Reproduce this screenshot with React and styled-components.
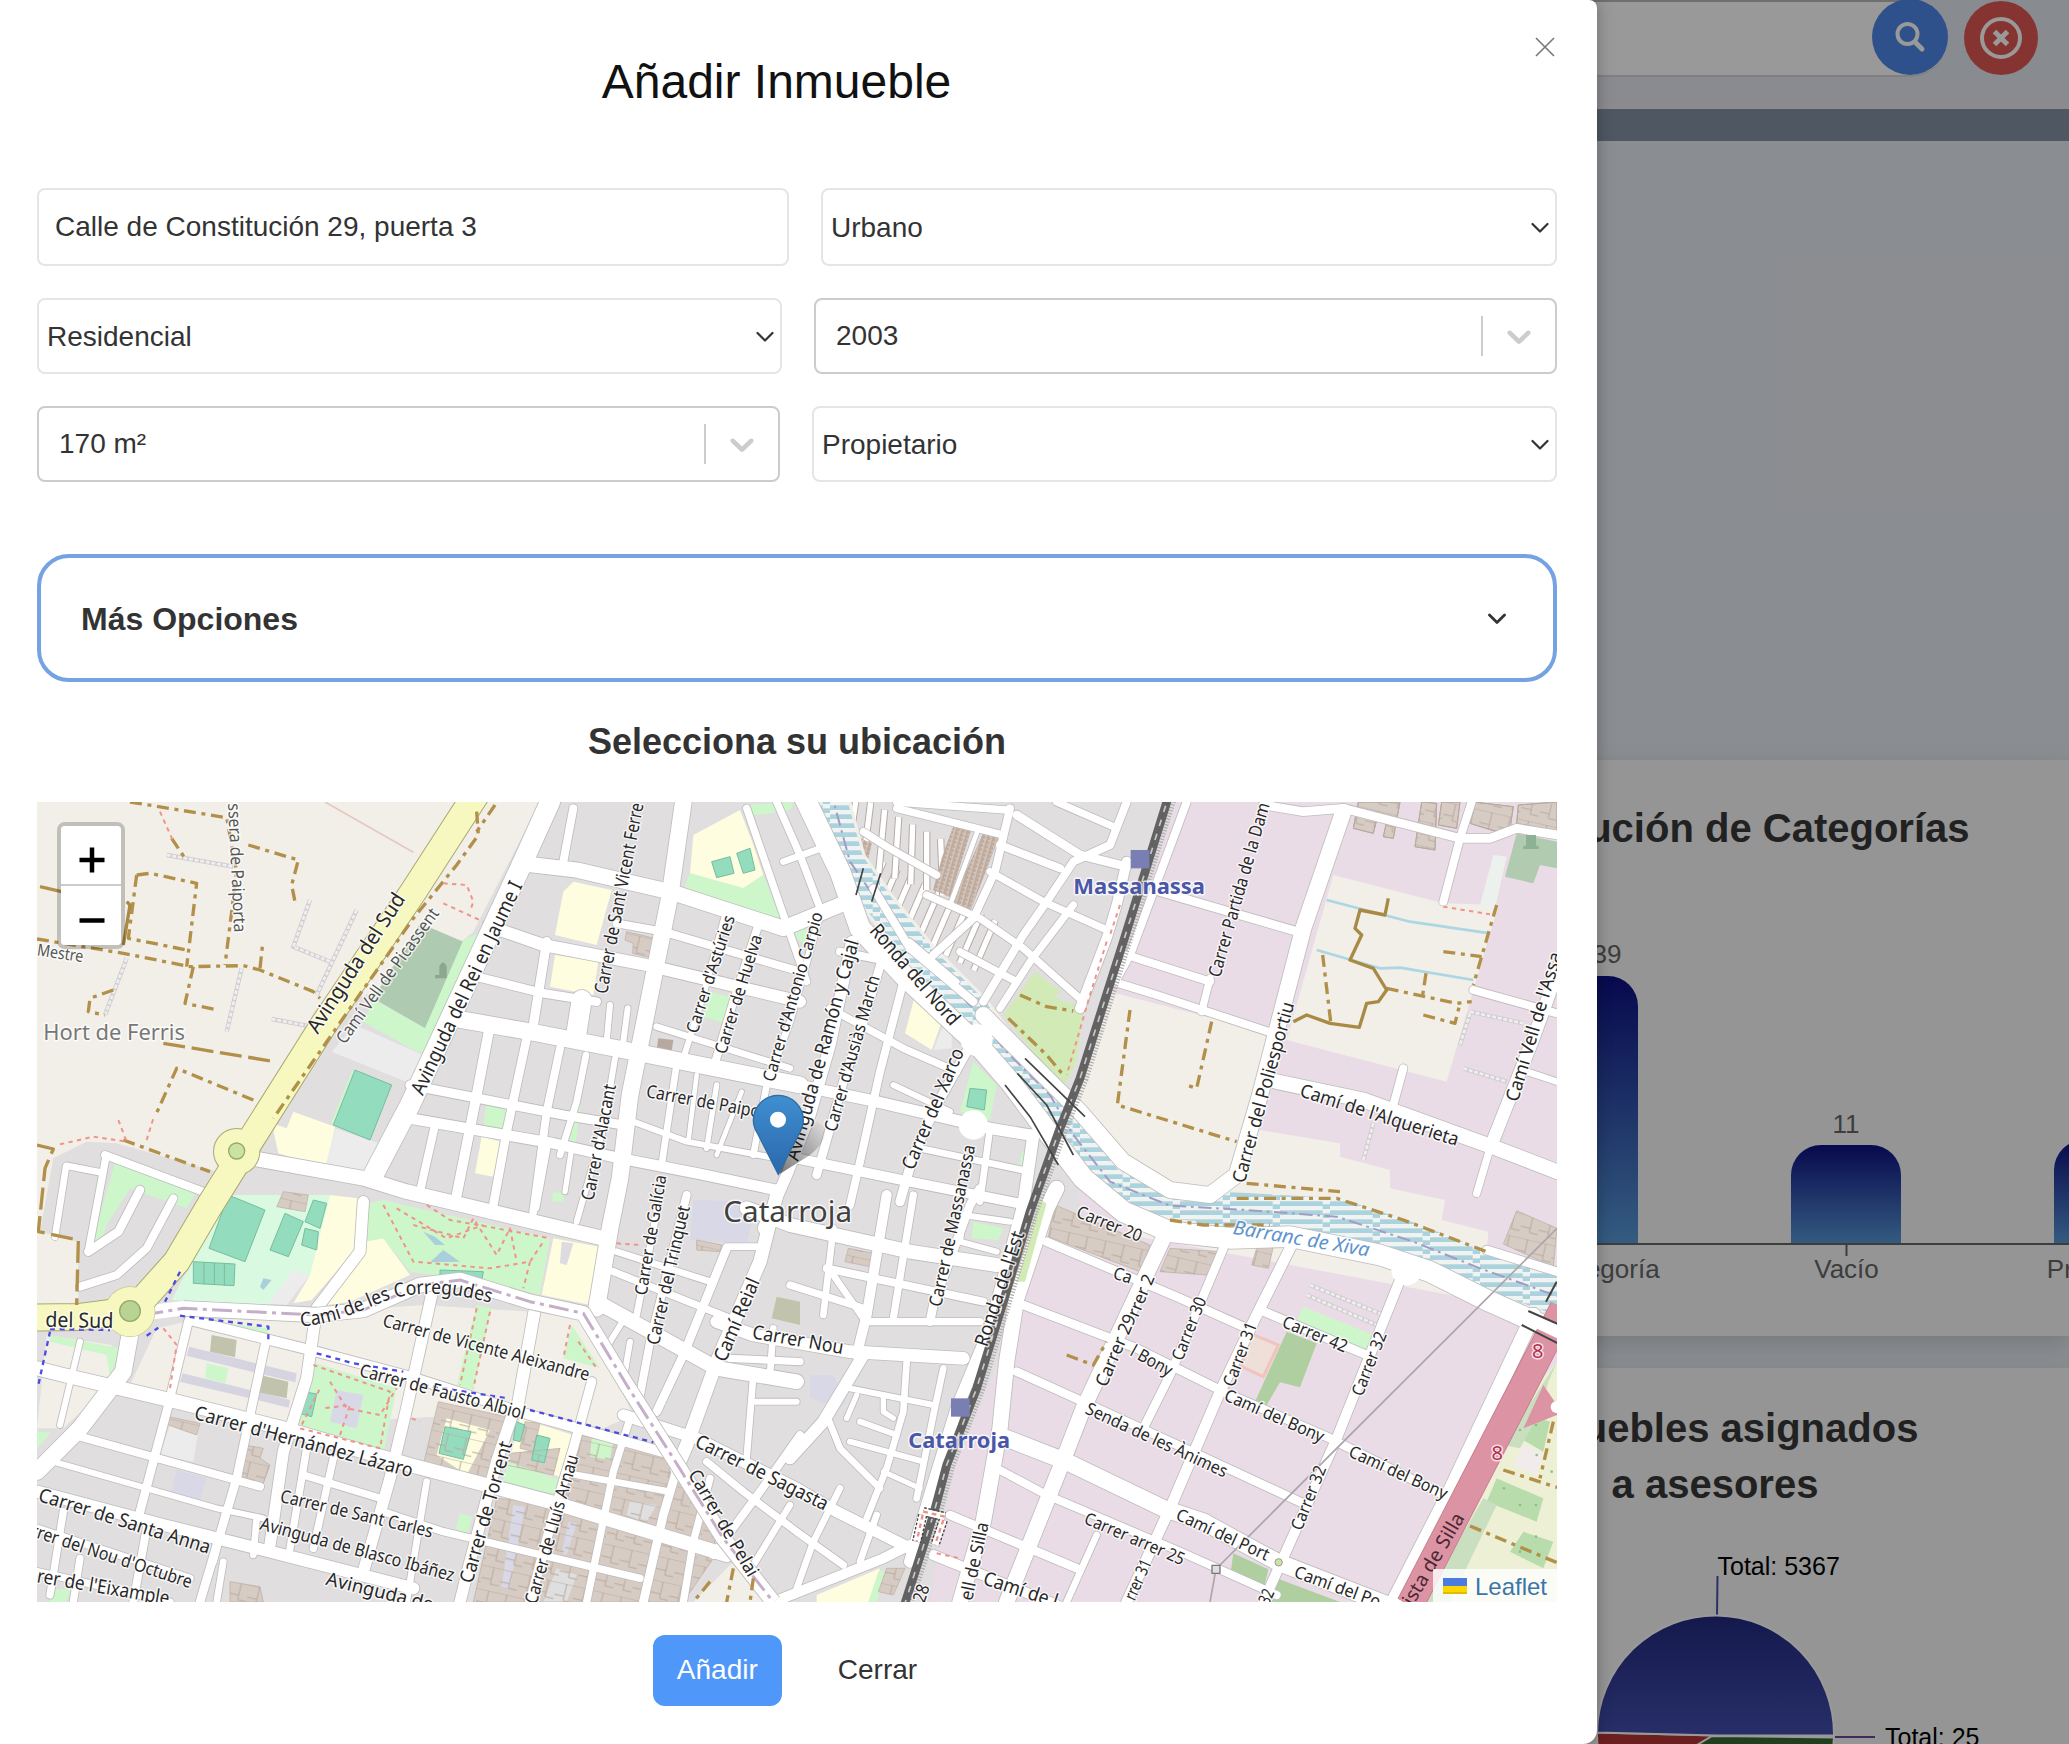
import React from "react";
import styled, { createGlobalStyle } from "styled-components";

const GlobalStyle = createGlobalStyle`
  * { box-sizing: border-box; }
  body { margin: 0; background: #e7ebf2; font-family: "Liberation Sans", Arial, sans-serif; color: #333; }
`;

/* ---------- dashboard behind the dialog ---------- */

const Page = styled.div`
  position: relative;
  width: 2069px;
  height: 1744px;
  overflow: hidden;
  background: #e7ebf2;
`;
const TopBar = styled.header`
  display: flex;
  justify-content: flex-end;
  align-items: flex-start;
  gap: 16px;
  height: 109px;
  padding-right: 31px;
  background: linear-gradient(#e3e8f0 70%, #e9e8ee);
`;
const SearchField = styled.div`
  display: flex;
  justify-content: flex-end;
  width: 900px;
  height: 77px;
  border: 2px solid #d5d5d8;
  border-top-color: #b9babd;
  border-right: 0;
  border-radius: 38px;
  background: #fff;
`;
const RoundButton = styled.div`
  display: flex;
  align-items: center;
  justify-content: center;
  width: ${(p) => p.$size}px;
  height: ${(p) => p.$size}px;
  margin-top: ${(p) => p.$top}px;
  border-radius: 50%;
  background: ${(p) => p.$color};
`;
const Band = styled.div`
  height: 32px;
  background: #8492a3;
`;
const Board = styled.main`
  display: flex;
  flex-direction: column;
  gap: 32px;
  margin-left: 1361px;
  padding-top: 619px;
`;
const Card = styled.section`
  flex: none;
  height: ${(p) => p.$height}px;
  padding-top: ${(p) => p.$pad}px;
  background: #f8f9fa;
  box-shadow: 0 8px 24px rgba(0, 0, 0, 0.14);
  text-align: center;
`;
const CardTitle = styled.h2`
  width: ${(p) => p.$width}px;
  margin: 0 auto;
  font-size: 40px;
  line-height: 56px;
  color: #383838;
`;
const Chart = styled.svg`
  display: block;
  margin-top: ${(p) => p.$gap}px;
  overflow: hidden;
`;
const Overlay = styled.div`
  position: absolute;
  inset: 0;
  background: rgba(0, 0, 0, 0.4);
`;

/* ---------- dialog ---------- */

const Dialog = styled.div`
  position: absolute;
  top: 0;
  left: 0;
  display: flex;
  flex-direction: column;
  width: 1597px;
  height: 1744px;
  padding: 0 40px 0 37px;
  border-radius: 0 8px 14px 0;
  background: #fff;
  box-shadow: 0 0 16px rgba(0, 0, 0, 0.28);
`;
const Header = styled.div`
  display: flex;
  justify-content: center;
  height: 188px;
  padding: 54px 41px 0 0;
`;
const Title = styled.h1`
  margin: 0;
  font-size: 48px;
  font-weight: 400;
  line-height: 56px;
  color: #111;
`;
const CloseButton = styled.div`
  position: absolute;
  top: 37px;
  right: 42px;
  line-height: 0;
`;
const Form = styled.div`
  display: flex;
  flex-direction: column;
  gap: 32px;
`;
const Row = styled.div`
  display: flex;
  justify-content: space-between;
  height: ${(p) => p.$height}px;
`;
const Field = styled.div`
  display: flex;
  align-items: center;
  width: ${(p) => p.$width}px;
  padding: ${(p) => p.$pad};
  border: 2px solid ${(p) => (p.$strong ? "#ccc" : "#e5e5e5")};
  border-radius: 8px;
  font-size: 28px;
  line-height: 34px;
`;
const FieldText = styled.span`
  flex: 1;
`;
const Separator = styled.span`
  width: 2px;
  height: 40px;
  margin-right: 16px;
  background: #ccc;
`;
const Accordion = styled.div`
  display: flex;
  align-items: center;
  justify-content: space-between;
  height: 128px;
  margin-top: 72px;
  padding: 1px 47px 0 40px;
  border: 4px solid #74a2e2;
  border-radius: 32px;
  font-size: 32px;
  line-height: 36px;
  font-weight: 700;
`;
const MapTitle = styled.h3`
  height: 120px;
  margin: 0;
  text-align: center;
  font-size: 36px;
  line-height: 120px;
`;
const MapFrame = styled.div`
  position: relative;
  width: 1520px;
  height: 800px;
  overflow: hidden;
`;
const ZoomControl = styled.div`
  position: absolute;
  top: 20px;
  left: 20px;
  border: 4px solid rgba(0, 0, 0, 0.2);
  border-radius: 8px;
  background-clip: padding-box;
  overflow: hidden;
`;
const ZoomButton = styled.div`
  display: flex;
  align-items: center;
  justify-content: center;
  width: 60px;
  height: ${(p) => (p.$divided ? 60 : 59)}px;
  padding: ${(p) => (p.$divided ? "9px 0 0 1px" : "0 0 0 1px")};
  border-bottom: ${(p) => (p.$divided ? "2px solid #ccc" : "0")};
  background: #fff;
`;
const Attribution = styled.div`
  position: absolute;
  right: 0;
  bottom: 0;
  display: flex;
  align-items: center;
  gap: 8px;
  height: 33px;
  padding: 1px 10px 0;
  background: rgba(255, 255, 255, 0.8);
  color: #3a76a8;
  font-size: 24px;
  line-height: 33px;
`;
const Actions = styled.div`
  display: flex;
  justify-content: center;
  gap: 32px;
  margin-top: 33px;
`;
const Button = styled.div`
  height: 71px;
  padding: 0 24px;
  border-radius: 12px;
  background: ${(p) => (p.$primary ? "#4f98fa" : "transparent")};
  color: ${(p) => (p.$primary ? "#fff" : "#333")};
  font-size: 28px;
  line-height: 70px;
`;

const Chevron = ({ w = 2.2 }) => (
  <svg width="18" height="12" viewBox="0 0 18 12" fill="none" stroke="#333" strokeWidth={w} strokeLinecap="round" strokeLinejoin="round">
    <path d="M1.5 2 L9 9.5 L16.5 2" />
  </svg>
);
const ThickChevron = () => (
  <svg width="40" height="40" viewBox="0 0 20 20" fill="#ccc">
    <path d="M4.516 7.548c0.436-0.446 1.043-0.481 1.576 0l3.908 3.747 3.908-3.747c0.533-0.481 1.141-0.446 1.574 0 0.436 0.445 0.408 1.197 0 1.615-0.406 0.418-4.695 4.502-4.695 4.502-0.217 0.223-0.502 0.335-0.787 0.335s-0.57-0.112-0.789-0.335c0 0-4.287-4.084-4.695-4.502s-0.436-1.17 0-1.615z" />
  </svg>
);
const SelectField = ({ width, children }) => (
  <Field $width={width} $pad="2px 6px 0 8px">
    <FieldText>{children}</FieldText>
    <Chevron />
  </Field>
);
const SearchSelect = ({ width, children }) => (
  <Field $width={width} $strong $pad="0 16px 0 20px">
    <FieldText>{children}</FieldText>
    <Separator />
    <ThickChevron />
  </Field>
);

/* ---------- map data: three units per pixel ---------- */

const C = {
  beige: "#f2efe9", pink: "#e9dce6", green: "#cdf7cb", pitch: "#94dcbe", school: "#fefde0",
  cemetery: "#aecab0", grass: "#d2ebb6", dark: "#afcfa1", brown: "#d7ccc4", lav: "#d8d8e6",
  light: "#ececec", olive: "#c2c3ac", complex: "#d9fae0", farm: "#eef0d6", dense: "#bfab9e",
};

const areas = [
  [C.beige, "21,21 1530,21 1330,410 1150,560 860,640 560,1130 260,1045 170,1040 70,1090 30,1310 145,1340 145,1530 21,1530"],
  [C.beige, "380,1600 470,1580 1180,1530 1660,1560 1810,1860 1720,1900 1500,1850 760,1890 430,1830 300,1770"],
  [C.beige, "50,1620 245,1650 250,1760 100,1900 21,1900"],
  [C.pink, "3440,21 4581,21 4581,2421 2700,2421 2740,2170 2780,2000 2890,1740 2980,1500 3040,1310 3150,1250 3130,900 3245,590"],
  [C.beige, "3240,590 3720,715 3610,1130 3500,1190 3300,1140 3130,930"],
  [C.beige, "3690,1005 3930,1045 3930,1085 4080,1125 4080,1180 4245,1215 4235,1275 4375,1310 4370,1375 4581,1450 4581,1560 3300,1320 3250,1180 3560,1190"],
  [C.beige, "3910,240 4240,325 4405,330 4250,860 3770,735"],
  [C.farm, "4581,1700 4450,1850 4150,2421 4581,2421"],
  [C.cemetery, "1030,610 1170,385 1300,440 1185,700"],
  [C.green, "1300,435 1345,415 1180,775 1140,760 1000,680 1030,612 1185,700"],
  [C.light, "975,690 1180,780 1140,865 905,770"],
  [C.light, "915,1000 1090,1060 1020,1120 970,1140 880,1110"],
  [C.green, "255,1105 500,1190 470,1240 300,1180 230,1290 205,1370 190,1330"],
  [C.green, "965,830 990,822 920,995 903,985"],
  [C.pitch, "975,825 1085,870 1020,1035 910,990"],
  [C.school, "790,950 915,995 885,1120 745,1075 725,985 770,1000"],
  [C.school, "1630,260 1745,285 1700,450 1575,420 1600,290"],
  [C.school, "1575,480 1705,500 1690,600 1560,575"],
  [C.school, "1355,1025 1415,1040 1390,1145 1335,1135"],
  [C.green, "1370,920 1437,928 1423,1010 1360,995"],
  [C.green, "1625,930 1652,930 1635,1058 1602,1050"],
  [C.green, "1570,1192 1605,1195 1598,1222 1565,1218"],
  [C.school, "1990,120 2130,45 2170,150 2200,240 2140,280 1980,235"],
  [C.green, "1980,235 2140,280 2200,240 2255,375 1960,285"],
  [C.pitch, "2045,200 2100,185 2112,235 2060,248"],
  [C.pitch, "2120,175 2160,160 2175,225 2140,235"],
  [C.green, "2150,30 2290,21 2280,45 2165,62"],
  [C.green, "2040,590 2100,605 2085,685 2020,665"],
  [C.green, "2290,385 2335,375 2325,450 2300,430"],
  [C.brown, "1790,410 1875,430 1860,487 1808,475 1810,445 1785,435"],
  ["#b8a99e", "1885,730 1930,735 1925,768 1880,762"],
  [C.dense, "2770,95 2825,100 2760,305 2710,285 2735,190"],
  [C.dense, "2860,115 2905,130 2820,350 2765,325"],
  [C.dense, "2490,130 2525,145 2510,210 2480,190"],
  [C.grass, "3015,530 3160,640 3140,800 3100,880 2920,660"],
  ["#e0dfdf", "3070,600 3100,590 3150,630 3100,620"],
  [C.school, "2655,600 2735,680 2705,765 2625,715"],
  [C.light, "2740,690 2765,710 2765,760 2710,765"],
  [C.green, "2830,800 2900,870 2880,975 2790,950"],
  [C.pitch, "2820,880 2870,885 2863,945 2810,935"],
  [C.green, "2975,1070 3000,1075 2995,1115 2968,1110"],
  [C.green, "2830,1280 2920,1300 2905,1335 2825,1330"],
  ["#b0cbb0", "4460,115 4581,140 4581,220 4530,210 4510,265 4425,245"],
  ["#edf1ee", "4390,180 4430,185 4395,340 4350,330"],
  [C.complex, "590,1200 900,1200 870,1400 840,1440 720,1530 425,1515"],
  [C.pitch, "595,1200 705,1245 645,1400 537,1360"],
  [C.pitch, "765,1255 820,1280 775,1385 720,1365"],
  [C.pitch, "850,1215 890,1225 870,1300 825,1280"],
  [C.pitch, "825,1300 865,1310 860,1365 815,1350"],
  [C.pitch, "490,1400 615,1407 612,1472 490,1465"],
  [C.light, "790,1425 840,1440 770,1530 715,1525"],
  [C.brown, "760,1190 835,1200 825,1250 740,1235"],
  [C.school, "900,1200 985,1210 975,1365 845,1515 790,1525 840,1440"],
  [C.school, "1000,1340 1060,1330 1140,1440 960,1520 890,1530"],
  [C.green, "1000,1230 1060,1215 1560,1330 1530,1500 1340,1455 1140,1430 1060,1330 1000,1340"],
  [C.pitch, "1230,1425 1360,1430 1355,1458 1230,1445"],
  ["#a9d0da", "1180,1310 1215,1325 1245,1350 1215,1350"],
  ["#a9d0da", "1240,1365 1290,1400 1200,1402"],
  ["#a9d0da", "700,1450 725,1455 700,1485 690,1475"],
  [C.school, "1570,1330 1708,1355 1683,1530 1535,1500"],
  ["#dddbe0", "1595,1340 1630,1345 1610,1410 1590,1405"],
  [C.green, "845,1700 1100,1780 1060,1975 795,1905"],
  [C.lav, "920,1785 1000,1800 980,1900 900,1880"],
  [C.pitch, "820,1790 860,1797 845,1865 808,1855"],
  ["#d6d4e0", "478,1655 800,1735 796,1762 470,1682"],
  ["#d6d4e0", "458,1735 780,1815 776,1838 450,1760"],
  [C.olive, "545,1620 620,1635 615,1687 540,1670"],
  [C.olive, "690,1740 775,1760 770,1810 683,1792"],
  [C.green, "530,1705 595,1720 587,1765 525,1750"],
  [C.light, "420,1890 510,1880 490,2000 390,1980"],
  [C.brown, "415,1865 510,1885 500,1920 415,1890"],
  [C.brown, "645,1950 700,1960 690,1990 720,2010 700,2065 610,2040"],
  [C.lav, "440,2025 530,2050 510,2115 425,2095"],
  [C.green, "60,1620 270,1660 240,1750 230,1680 60,1640"],
  [C.green, "21,1910 65,1910 21,1960"],
  [C.green, "485,1575 715,1600 712,1635 500,1590"],
  [C.green, "1340,1530 1385,1540 1330,1785 1280,1770"],
  [C.green, "1625,1590 1710,1720 1600,1690"],
  [C.brown, "1225,1820 1430,1865 1370,2055 1180,2010"],
  [C.school, "1250,1870 1380,1905 1310,2040 1220,1980"],
  [C.pitch, "1245,1895 1323,1910 1300,1993 1227,1975"],
  [C.school, "1470,1870 1630,1920 1600,2050 1440,1990"],
  [C.brown, "1485,1880 1530,1885 1510,1970 1470,1960"],
  [C.brown, "1440,1975 1590,1960 1570,2040 1430,2010"],
  [C.pitch, "1458,1880 1485,1890 1470,1940 1450,1935"],
  [C.pitch, "1520,1920 1560,1930 1543,2003 1505,1995"],
  [C.green, "1435,2000 1575,2050 1640,2060 1575,2115 1415,2070"],
  [C.brown, "1650,1920 1940,1990 2060,2160 2050,2290 1960,2421 1330,2421 1400,2110 1600,2130"],
  [C.green, "1685,1930 1750,1940 1740,1995 1680,1985"],
  ["#e0dfdf", "1800,2120 1880,2130 1850,2180 1790,2160"],
  ["#e0dfdf", "1580,2320 1640,2340 1610,2421 1540,2421"],
  [C.lav, "1450,2130 1485,2135 1440,2380 1415,2375"],
  [C.lav, "1615,2180 1640,2185 1610,2280 1595,2275"],
  [C.green, "1290,2155 1325,2165 1315,2215 1275,2210"],
  [C.beige, "2110,2300 2200,2360 2260,2421 1990,2421"],
  [C.brown, "600,2360 690,2375 700,2421 600,2421"],
  [C.green, "60,2380 120,2385 110,2421 60,2421"],
  [C.olive, "2240,1505 2310,1520 2310,1590 2225,1570"],
  [C.lav, "1990,1215 2180,1220 2150,1345 1980,1335"],
  [C.brown, "2000,1335 2075,1350 2070,1370 2000,1365"],
  [C.brown, "2455,1360 2530,1375 2520,1415 2445,1400"],
  [C.lav, "2340,1740 2410,1740 2450,1820 2430,1840 2340,1810"],
  [C.brown, "3075,1230 3360,1350 3330,1430 3055,1325"],
  [C.brown, "3420,1360 3570,1370 3530,1440 3390,1430"],
  [C.brown, "3680,1360 3730,1355 3715,1420 3665,1410"],
  [C.school, "2360,2400 2550,2320 2520,2421 2360,2421"],
  [C.green, "2545,2330 2570,2325 2540,2421 2515,2421"],
  [C.brown, "2570,2320 2625,2320 2590,2400 2545,2390"],
  [C.green, "3820,1535 4030,1620 4020,1672 3800,1575"],
  [C.dark, "3770,1610 3860,1645 3810,1777 3750,1762 3710,1830 3675,1820"],
  ["#efdfd9", "3660,1615 3745,1650 3700,1745 3635,1715"],
  [C.dark, "3610,2275 3715,2323 3700,2387 3600,2345"],
  [C.dark, "3740,2350 3930,2421 3720,2421"],
  [C.brown, "4460,1247 4581,1300 4570,1415 4420,1347"],
  ["#b9dcac", "4500,1860 4560,1880 4540,1970 4470,1930"],
  ["#b9dcac", "4400,2050 4540,2110 4520,2180 4370,2120"],
  ["#b9dcac", "4480,2210 4570,2240 4540,2320 4440,2270"],
  ["#c9dfc0", "4360,2110 4400,2130 4260,2421 4180,2421"],
  ["#f1eceb", "4480,1950 4540,1975 4520,2040 4450,2010"],
  ["#c9dfc0", "4581,1700 4555,1760 4530,1850 4470,1960 4420,1950"],
];

const houses = [
  "3985,21 4110,21 4090,130 4060,125 4070,80 4040,75 4030,115 3970,100",
  "4175,21 4220,25 4215,165 4155,155", "4235,21 4290,21 4280,100 4225,90",
  "4330,21 4450,35 4440,100 4400,110 4320,85", "4465,30 4581,21 4581,110 4460,85",
];

const roads = [
  [60, "1560,21 1470,220 1140,930 1030,1140"],
  [44, "640,1085 1000,1150 1130,1190 1720,1330"],
  [46, "1470,205 1640,225 1920,290 2260,400 2430,330"],
  [36, "1410,405 1540,450 1850,510 2310,620"],
  [24, "1760,385 1900,410 2310,530"],
  [26, "1320,540 1540,595 1700,620"],
  [50, "1270,670 1500,710 1860,780 2310,870"],
  [34, "2280,865 2540,920 2880,1000 3000,1020"],
  [20, "1880,695 2280,820"],
  [28, "1140,870 1600,960 1780,990"],
  [32, "1110,965 1570,1045 1770,1090 2000,1135 2240,1185"],
  [30, "2250,1080 2640,1160 2990,1230"],
  [42, "2150,1240 2280,1290 2640,1370 2900,1410"],
  [18, "1810,980 1970,1040 2240,1090"],
  [24, "1630,40 1600,200"],
  [50, "1960,21 1920,300 1840,700 1800,900 1770,1150 1740,1300 1700,1540"],
  [28, "1550,440 1510,690"],
  [30, "1380,690 1340,900 1280,1200"],
  [26, "1490,730 1430,1010 1390,1230"],
  [24, "1590,760 1550,950 1510,1250"],
  [20, "1668,780 1640,920 1590,1080"], [18, "1755,790 1720,1000 1640,1280"],
  [24, "1215,990 1170,1190"],
  [60, "1655,615 1640,710"], [18, "1740,630 1730,740"], [18, "1793,640 1780,740"], [16, "1555,1050 1520,1240"], [16, "1625,1060 1605,1190"],
  [20, "1938,820 1895,1110"], [14, "2000,840 1975,1040"], [16, "2060,870 2030,1060"], [14, "2135,890 2060,1080"],
  [18, "2085,360 2020,600 1960,790"], [24, "2185,390 2110,620 2050,820"], [20, "2370,360 2280,680 2210,870 2170,1080"],
  [34, "2465,440 2400,750 2340,960 2270,1140 2200,1300"], [26, "2560,480 2500,680 2440,860 2400,1000 2360,1140"],
  [24, "2620,560 2550,830 2490,1100 2460,1230"], [28, "2810,770 2720,930 2650,1080 2610,1220"],
  [22, "2150,40 2250,330 2330,560"], [20, "2260,200 2400,150"], [22, "2240,21 2310,180 2370,340"],
  [24, "2430,470 2580,500"], [22, "2400,640 2620,760 2780,830"], [18, "2590,870 2760,950"],
  [20, "2670,1060 3000,1130"], [20, "2880,1000 2850,1220"], [22, "2600,40 2920,120"],
  [22, "2500,110 2570,155 2720,240"], [22, "2690,300 2850,370 2980,460 3160,620"],
  [24, "2910,150 3090,220"], [22, "2880,230 3040,320 3220,400"], [26, "2960,60 3150,180 3290,215"],
  [22, "2600,21 2930,45"], [22, "3080,21 3250,95"], [24, "2940,40 2895,230 2830,370 2710,480"],
  [24, "3290,21 3240,150 3130,200 3050,320 2980,420 2860,620"], [30, "3290,200 3260,330 3230,430 3150,640"],
  [22, "3130,330 3000,500 2910,640"], [22, "2790,470 2960,560"], [18, "2640,440 2780,560"],
  [14, "2842,110 2762,325"],
  [26, "3390,290 3820,415"], [24, "3290,480 3540,560"], [22, "3540,550 3515,650"], [24, "3250,560 3380,600 3730,715"],
  [24, "3470,21 3300,480 3255,560"], [26, "3700,30 3820,50 3940,40 4290,130 4380,130 4460,100 4581,120"],
  [24, "4325,21 4290,130 4240,320"], [44, "3740,860 4000,915 4400,1060 4581,1130"], [24, "4120,820 4090,930"],
  [38, "4600,480 4510,730 4380,1060"], [22, "4380,1060 4340,1195"], [24, "4330,585 4581,655"], [20, "4490,830 4581,860"],
  [36, "3010,1020 2980,1230 2880,1600 2780,1840 2700,2100 2640,2300"],
  [46, "3080,1180 3050,1240 2960,1510 2930,1700 2910,1900 2860,2180 2790,2421"],
  [26, "3050,1340 3450,1510 3650,1600"], [26, "3690,1545 4010,1680"],
  [26, "2980,1530 3320,1660 3580,1790 3900,1930 4260,2110"],
  [26, "2960,1730 3170,1825 3420,1940 3830,2130"],
  [50, "2930,1930 3110,2000 3400,2140 3520,2180 3740,2300 4100,2440"],
  [24, "2900,2020 3050,2100 3450,2270 3740,2400"], [26, "2760,2160 3140,2320"], [30, "2710,2280 3080,2430"],
  [46, "3400,1330 3160,1840 3090,2020 2930,2421"], [26, "3580,1360 3420,1740 3340,1900"],
  [32, "3790,1340 3680,1560 3570,1790 3420,2140 3290,2421"], [30, "4120,1430 3920,1930 3750,2310 3700,2421"],
  [20, "3200,2220 3110,2421"], [44, "4510,1560 4260,2090 4090,2421"], [26, "4370,1365 4581,1430"],
  [24, "225,1080 520,1190"], [20, "110,1112 210,1132"], [22, "228,1085 175,1370"], [20, "108,1115 75,1325"],
  [24, "150,1475 260,1440 350,1360 430,1210"], [26, "175,1370 265,1310 330,1185"],
  [34, "1000,1220 990,1370 860,1540 830,1750 760,1970 720,2250"],
  [26, "475,1580 410,1850 330,2150"], [26, "705,1650 620,2050 510,2421"],
  [30, "480,1575 840,1665 1140,1745 1500,1860 1930,1980"],
  [42, "21,1720 100,1740 440,1820 760,1900 1140,2010 1560,2120 2090,2280"],
  [50, "310,1560 280,1730 150,1900 21,2030"], [18, "40,1735 210,1770"], [18, "150,1640 90,1890"],
  [24, "150,1925 690,2075"], [18, "70,2000 560,2140 700,2170"],
  [36, "21,2090 400,2190 800,2290 1150,2380"], [22, "21,2200 480,2350"], [22, "21,2330 420,2421"],
  [22, "100,2150 60,2400"], [24, "350,2200 310,2421"], [22, "590,2140 550,2300"], [20, "680,2170 670,2280"],
  [22, "910,1990 850,2260"], [22, "830,1960 780,2260"], [22, "150,2290 130,2421"], [20, "580,2300 560,2421"],
  [22, "820,2040 1050,2110"], [34, "1450,1850 1400,2000 1320,2300 1290,2421"], [36, "1515,1540 1460,1850"],
  [34, "1205,1500 1130,1840 1080,2050 1000,2330"], [28, "1685,1760 1630,1960 1570,2160 1500,2421"],
  [22, "1800,1870 1750,2030 1670,2421"], [26, "1950,1990 1900,2160 1840,2421"], [22, "2040,2050 1990,2240 1960,2421"],
  [20, "1640,2040 1920,2090"], [22, "1060,2150 1240,2210 1830,2350"], [20, "1190,2060 1130,2421"],
  [44, "1700,1520 2060,1720 2300,1760"], [38, "2060,1580 2170,1620 2460,1670 2800,1690"],
  [20, "1760,1370 2040,1460"], [22, "1750,1430 2100,1570"], [24, "1970,1200 1860,1640 1830,1800"],
  [20, "1890,1200 1820,1560"], [40, "2240,1200 2190,1400 2060,1700 1970,1950 1940,2020"],
  [26, "2090,1360 1960,1680 1880,1850"], [20, "2090,1355 2180,1355"], [22, "2100,1690 2310,1700"],
  [34, "1780,1860 2000,1930 2300,2080 2420,2150 2640,2260"], [24, "2310,1920 2190,2090 2050,2280"],
  [22, "2030,2000 2140,2090 2300,2210 2440,2310"], [20, "2280,2130 2170,2310"], [36, "2500,1680 2380,1880 2280,1990"],
  [20, "2170,1740 2150,1990"], [20, "2230,1600 2220,1740"], [18, "2170,1820 2300,1820"], [18, "1790,1560 1740,1640"], [18, "1800,1640 1780,1760"],
  [20, "2390,1860 2430,1960 2550,2080"], [20, "2630,1700 2620,1850 2570,2020 2510,2170"],
  [20, "2740,1720 2710,1860 2660,2110"], [18, "2460,1780 2710,1830"], [18, "2460,1940 2680,2000"],
  [16, "2480,1800 2450,1870"], [16, "2560,1800 2560,1850 2590,1870"], [16, "2560,2030 2670,2080"], [18, "2490,1880 2600,1920"],
  [30, "2230,2421 2560,2290 2640,2250"], [20, "2430,2080 2350,2240 2300,2380"], [20, "2540,2160 2490,2300"],
  [30, "2570,1200 2540,1380 2510,1560 2480,1680"], [22, "2650,1200 2590,1570"],
  [26, "2850,1180 2820,1230 2710,1530 2700,1580"], [22, "2520,1580 2850,1580"], [24, "2390,1420 2860,1520"],
  [20, "2410,1300 2380,1560"], [20, "2410,1440 2500,1570"], [22, "2280,1470 2500,1540"],
  [18, "2800,1260 2790,1340 2900,1370"], [18, "2800,1260 2940,1280"],
  [24, "2530,280 2640,460 2830,620"],
  [48, "2860,660 2990,790 3150,950 3280,1100 3420,1185 3540,1200 3620,1140 3690,900 3820,400 3940,50"],
  [62, "2310,-20 2430,230 2490,400 2620,540 2790,700 2840,745 2940,860 3060,1020 3160,1150 3280,1250 3420,1310 3600,1330 3780,1325 4050,1380 4200,1430 4380,1520 4581,1610"],
];

const tracks = [
  "300,21 590,68 620,230 585,510", "655,150 805,195 785,270 795,320", "425,130 465,190",
  "320,240 360,235 500,265 470,515", "320,240 295,430 470,465", "21,432 280,475 480,515 640,512 690,525 850,590 870,610",
  "690,520 697,455", "490,515 465,625 565,645", "250,585 180,610 175,650 225,660", "670,915 440,820 375,965",
  "280,1035 540,1130", "1395,30 1340,110", "1340,50 1345,120 1280,210 1150,370 960,640 730,970",
  "2935,670 3050,780 3100,840", "2970,600 3050,635 3130,648", "3300,645 3262,930 3620,1040", "3545,680 3500,880 3470,870",
  "4070,580 4280,625 4325,620", "4400,330 4330,570", "4240,470 4355,485", "3878,480 3902,680", "4180,660 4275,685 4290,625",
  "4188,535 4178,600", "3650,1165 3930,1190", "3620,1210 3920,1210 4120,1275 4370,1370", "3420,1275 3520,1290 3720,1290",
  "4420,2025 4581,2077", "4320,2193 4581,2303", "4570,1880 4530,2050", "3110,1680 3190,1710 3230,1640",
  "2110,2320 2090,2421", "2040,2360 1990,2421", "2170,2350 2160,2421",
];
const longTracks = ["400,745 735,800", "30,275 95,290", "21,1050 70,1062 45,1120 25,1310 145,1335 140,1530"];
const solidTracks = [
  "4075,310 4065,360 3990,345 3975,400 3995,420 3960,495 4030,520 4070,585 4045,620 4010,625 3988,697 3900,685 3830,660 3790,680",
  "290,320 300,330 280,450",
];
const footways = [
  "390,50 430,140", "90,1048 190,1025 290,1040 265,975", "350,1035 370,970", "1240,265 1310,270 1330,320 1320,350", "1240,325 1360,380",
  "400,1600 440,1650 420,1780", "1190,1230 1260,1275 1400,1300 1560,1330", "1060,1230 1150,1400 1380,1420 1500,1400 1540,1340",
  "1150,1290 1300,1330 1330,1270 1400,1380 1440,1300 1460,1400", "1500,1400 1480,1480", "1100,1240 1250,1330 1360,1290",
  "850,1710 1080,1790 1050,1960 810,1900 870,1780", "900,1760 950,1840 1050,1860 1100,1780", "930,1920 960,1830 880,1840",
  "1340,1540 1290,1770", "1380,1550 1330,1780", "1620,1590 1600,1690", "1645,1640 1700,1720", "3230,440 3180,600 3110,840",
  "4240,335 4380,358", "1760,1345 1830,1350", "3270,330 3240,420", "2720,2275 2790,2290", "1145,1870 1170,1880",
];
const cycleways = ["450,1430 405,1520", "450,1562 715,1595 715,1635", "60,1610 25,1770", "60,1602 240,1605", "350,1622 385,1598", "860,1675 970,1705 1120,1730", "1500,1845 1870,1942", "1180,1770 1430,1810"];
const serviceRoads = [
  "410,180 610,215", "840,315 790,455 900,500", "980,345 860,600", "290,490 225,660", "635,520 590,710", "725,672 830,692",
  "4320,655 4290,750", "4320,650 4480,685", "4300,820 4430,860", "4030,985 4000,1095", "3840,1470 4060,1560", "3830,1500 4040,1590",
];

const RAIL = "3420,-10 3280,440 3150,850 3090,1000 3000,1250 2920,1520 2840,1780 2750,2010 2710,2160 2620,2440";
const RIVER = "2400,-20 2460,200 2550,330 2680,490 2830,640 2920,760 3060,900 3130,1020 3240,1160 3420,1232 3650,1245 3920,1265 4150,1340 4350,1420 4600,1510";
const YELLOW = "1350,-20 1150,290 880,690 640,1070 540,1230 440,1400 310,1545 150,1566 10,1568";

/* text, x1, y1, x2, y2 (centre line of the label), size */
const labels = [
  ["ssera de Paiporta", 612, 25, 630, 412, 48, "#555"],
  ["Mestre", 22, 464, 160, 485, 46, "#555"],
  ["Avinguda del Sud", 845, 708, 1110, 300, 58],
  ["Camí Vell de Picassent", 930, 740, 1215, 345, 48, "#555"],
  ["Avinguda del Rei en Jaume I", 1160, 895, 1460, 262, 56],
  ["Carrer de Sant Vicent Ferre", 1712, 595, 1822, 24, 52],
  ["Carrer d'Astúries", 1985, 712, 2098, 362, 48],
  ["Carrer de Huelva", 2070, 775, 2180, 420, 48],
  ["Carrer d'Antonio Carpio", 2215, 858, 2362, 352, 48],
  ["Carrer de Paipo", 1850, 888, 2190, 950, 50],
  ["Carrer d'Alacant", 1672, 1215, 1740, 868, 50],
  ["Avinguda de Ramón y Cajal", 2285, 1095, 2468, 435, 54],
  ["Carrer d'Ausiàs March", 2400, 1008, 2532, 542, 50],
  ["Ronda del Nord", 2532, 395, 2778, 682, 56],
  ["Carrer del Xarco", 2632, 1120, 2785, 762, 54],
  ["Carrer Partida de la Dam", 3552, 545, 3702, 24, 50],
  ["Carrer del Poliesportiu", 3625, 1162, 3775, 622, 52],
  ["Camí de l'Alquerieta", 3812, 885, 4285, 1035, 52],
  ["Camí Vell de l'Assa", 4445, 918, 4578, 472, 52],
  ["del Sud", 46, 1574, 250, 1578, 58],
  ["Carrer de Vicente Aleixandre", 1060, 1575, 1678, 1740, 50],
  ["Carrer de Fausto Albiol", 990, 1725, 1485, 1856, 50],
  ["Carrer d'Hernández Lázaro", 495, 1852, 1148, 2028, 54],
  ["Carrer de Sant Carles", 752, 2102, 1208, 2210, 50],
  ["Avinguda de Blasco Ibáñez", 692, 2185, 1272, 2342, 50],
  ["Avinguda de", 890, 2350, 1210, 2430, 52],
  ["Carrer de Santa Anna", 28, 2098, 540, 2258, 54],
  ["rrer del Nou d'Octubre", 5, 2205, 485, 2362, 50],
  ["rer de l'Eixample", 22, 2342, 418, 2410, 54],
  ["Carrer de Torrent", 1308, 2362, 1428, 1940, 54],
  ["Carrer de Lluís Arnau", 1502, 2425, 1628, 1980, 50],
  ["Carrer de Sagasta", 2000, 1935, 2392, 2130, 54],
  ["Carrer de Pelai", 1990, 2028, 2172, 2340, 52],
  ["Carrer de Galícia", 1832, 1500, 1892, 1140, 48],
  ["Carrer del Trinquet", 1868, 1648, 1962, 1232, 50],
  ["Camí Reial", 2068, 1696, 2172, 1452, 54],
  ["Carrer Nou", 2168, 1610, 2440, 1658, 54],
  ["Carrer de Massanassa", 2715, 1534, 2818, 1050, 50],
  ["Ronda de l'Est", 2852, 1652, 2965, 1310, 54],
  ["Carrer 20", 3142, 1248, 3334, 1325, 48],
  ["Carrer 29", 3212, 1772, 3302, 1560, 50],
  ["rrer 2", 3308, 1562, 3358, 1440, 48],
  ["Ca", 3252, 1432, 3305, 1450, 48],
  ["l Bony", 3306, 1664, 3424, 1730, 48],
  ["Senda de les Ànimes", 3170, 1838, 3590, 2032, 48],
  ["Carrer arrer 25", 3166, 2168, 3462, 2295, 48],
  ["rrer 31", 3298, 2412, 3350, 2295, 48],
  ["ell de Silla", 2808, 2415, 2858, 2182, 50],
  ["Camí de l", 2862, 2348, 3082, 2420, 54],
  ["28", 2665, 2420, 2682, 2370, 50],
  ["Carrer 30", 3440, 1694, 3514, 1508, 48],
  ["Carrer 31", 3595, 1772, 3665, 1583, 48],
  ["Carrer 42", 3760, 1578, 3950, 1657, 48],
  ["Carrer 32", 3980, 1800, 4055, 1612, 48],
  ["Camí del Bony", 3586, 1798, 3880, 1927, 48],
  ["Camí del Bony", 3960, 1967, 4250, 2098, 48],
  ["Carrer 32", 3798, 2203, 3873, 2014, 48],
  ["Camí del Port", 3442, 2156, 3715, 2282, 48],
  ["Camí del Po", 3795, 2329, 4050, 2422, 48],
  ["32", 3700, 2425, 3718, 2385, 48],
  ["Hort de Ferris", 40, 712, 465, 712, 62, "#777"],
];

const Label = ({ item }) => {
  const [text, x1, y1, x2, y2, size, color = "#282828"] = item;
  const length = Math.hypot(x2 - x1, y2 - y1);
  const angle = (Math.atan2(y2 - y1, x2 - x1) * 180) / Math.PI;
  return (
    <text
      transform={`translate(${x1} ${y1}) rotate(${angle})`}
      dy="0.34em"
      fontSize={size * 1.08}
      fill={color}
      textLength={length}
      lengthAdjust="spacingAndGlyphs"
    >
      {text}
    </text>
  );
};

const fan = Array.from({ length: 9 }, (_, i) => [2440 + i * 42, 30 + i * 22]);

const CityMap = () => (
  <svg width="1520" height="800" viewBox="21 21 4560 2400" fontFamily='"Noto Sans", sans-serif' style={{ display: "block" }}>
    <defs>
      <pattern id="water" width="150" height="27" patternUnits="userSpaceOnUse">
        <rect width="150" height="27" fill="#f0f3f1" />
        <rect width="128" height="14" y="4" fill="#abd3de" />
        <rect width="22" height="14" x="128" y="13" fill="#abd3de" />
      </pattern>
      <pattern id="plots" width="56" height="72" patternUnits="userSpaceOnUse" patternTransform="rotate(13)">
        <path d="M0 0 H56 M0 38 H30 M30 0 V52 M30 52 H56" stroke="#b9aaa0" strokeWidth="3" fill="none" />
      </pattern>
      <pattern id="terraces" width="16" height="13" patternUnits="userSpaceOnUse" patternTransform="rotate(16)">
        <path d="M0 2 H10 M8 0 V13" stroke="#dcd0c6" strokeWidth="3" fill="none" />
      </pattern>
      <linearGradient id="pin" x1="0" y1="0" x2="0" y2="1">
        <stop offset="0" stopColor="#3f8fd0" />
        <stop offset="1" stopColor="#2a68ac" />
      </linearGradient>
      <linearGradient id="pinShadow" x1="0" y1="1" x2="1" y2="0">
        <stop offset="0" stopColor="#000" stopOpacity="0.55" />
        <stop offset="1" stopColor="#000" stopOpacity="0" />
      </linearGradient>
    </defs>
    <rect x="0" y="0" width="4600" height="2440" fill="#e0dedf" />
    {areas.map(([fill, points], i) => (
      <polygon key={i} points={points} fill={fill} />
    ))}
    {areas.filter(([fill]) => fill === C.brown).map(([, points], i) => (
      <polygon key={i} points={points} fill="url(#plots)" stroke="#b9aaa0" strokeWidth="2" />
    ))}
    {areas.filter(([fill]) => fill === C.pitch).map(([, points], i) => (
      <polygon key={i} points={points} fill="none" stroke="#76bd9f" strokeWidth="3" />
    ))}
    {houses.map((points, i) => (
      <g key={i} stroke="#b9aaa0" strokeWidth="3">
        <polygon points={points} fill={C.brown} />
        <polygon points={points} fill="url(#plots)" />
      </g>
    ))}
    <polygon points="3660,1615 3745,1650 3700,1745 3635,1715" fill="none" stroke="#f2c3bd" strokeWidth="9" />
    <g fill="none" strokeLinejoin="round">
      {fan.map(([x, y], i) => (
        <g key={i}>
          {i < 7 && <path d={`M${x + 40} ${y - 30} L${x + 10 + i * 6} ${y + 170 - i * 5}`} stroke="#b7aaa3" strokeWidth="22" />}
          {i < 7 && <path d={`M${x + 40} ${y - 30} L${x + 10 + i * 6} ${y + 170 - i * 5}`} stroke="#fff" strokeWidth="16" />}
          <path d={`M${x + 120} ${y + 170} L${x + 55} ${y + 320}`} stroke="#b7aaa3" strokeWidth="22" />
          <path d={`M${x + 120} ${y + 170} L${x + 55} ${y + 320}`} stroke="#fff" strokeWidth="16" />
        </g>
      ))}
      {areas.filter(([fill]) => fill === C.dense).map(([fill, points], i) => (
        <g key={i}>
          <polygon points={points} fill={fill} />
          <polygon points={points} fill="url(#terraces)" />
        </g>
      ))}
      <polyline points={RIVER} stroke="#f2efe9" strokeWidth="100" />
      <polyline points={RIVER} stroke="url(#water)" strokeWidth="82" />
      <polyline points="3500,1240 3920,1265 4150,1340 4350,1420 4600,1510" stroke="url(#water)" strokeWidth="110" />
      <polyline points={RIVER} stroke="#a39bc4" strokeWidth="6" strokeDasharray="40 14 8 14" />
      <path d="M3890 315 L4140 380 L4380 415 M3860 465 L4050 520 L4110 518 L4330 555" stroke="#abd6e2" strokeWidth="8" />
      {serviceRoads.map((p, i) => <polyline key={i} points={p} stroke="#cfcdd0" strokeWidth="13" />)}
      {serviceRoads.map((p, i) => <polyline key={i} points={p} stroke="#f0eeee" strokeWidth="8" strokeDasharray="12 5" />)}
      <g strokeLinecap="round">
        {roads.map(([w, p], i) => <polyline key={i} points={p} stroke="#bfbcbd" strokeWidth={w + 5} />)}
        {roads.map(([w, p], i) => <polyline key={i} points={p} stroke="#fff" strokeWidth={w} />)}
      </g>
      <circle cx="2830" cy="990" r="44" fill="#fff" />
      <circle cx="2840" cy="735" r="48" fill="#fff" />
      <circle cx="4130" cy="1425" r="46" fill="#fff" />
      <polygon points="3050,1225 3010,1370 2985,1460 2960,1460 3000,1330 3030,1215" fill={C.grass} />
      <polyline points="460,1540 860,1560 1000,1545 1170,1470 1290,1455 1500,1520 1660,1555 1790,1770 1930,1990 2080,2230 2230,2421" stroke="#bfbcbd" strokeWidth="49" />
      <polyline points="340,1555 460,1540 860,1560 1000,1545 1170,1470 1290,1455 1500,1520 1660,1555 1790,1770 1930,1990 2080,2230 2230,2421" stroke="#fff" strokeWidth="44" />
      <polyline points="340,1560 460,1540 860,1560 1000,1545 1170,1470 1290,1455 1500,1520 1660,1555 1790,1770 1930,1990 2080,2230 2230,2421" stroke="#c5aec9" strokeWidth="9" strokeDasharray="60 16 12 16" />
      <polyline points={YELLOW} stroke="#aaa872" strokeWidth="84" />
      <circle cx="620" cy="1070" r="71" fill="#aaa872" />
      <circle cx="300" cy="1550" r="76" fill="#c9c890" />
      <polyline points={YELLOW} stroke="#f7f8c0" strokeWidth="78" />
      <circle cx="620" cy="1070" r="68" fill="#f7f8c0" />
      <circle cx="300" cy="1550" r="74" fill="#f7f8c0" />
      <circle cx="620" cy="1068" r="24" fill="#cbe3a1" stroke="#96a86c" strokeWidth="4" />
      <circle cx="300" cy="1548" r="31" fill="#b9d394" stroke="#96a86c" strokeWidth="4" />
      <polyline points="4600,1540 4140,2430" stroke="#c57a8c" strokeWidth="84" />
      <polyline points="4600,1540 4140,2430" stroke="#dc94a4" strokeWidth="79" />
      <path d="M4540 1770 L4581 1830 L4581 1860 L4480 1900 Z" fill="#dc94a4" />
      <circle cx="4580" cy="1836" r="18" fill="#fff" />
      <path d="M4390 1500 L4581 1585 L4581 1630 L4350 1520 Z" fill="#fff" />
      <path d="M4475 1590 L4590 1648 M4495 1548 L4590 1590 M4580 1460 L4548 1520" stroke="#444" strokeWidth="6" />

      <polyline points={RAIL} stroke="#b1afaf" strokeWidth="34" transform="translate(9 0)" strokeDasharray="4 5" />
      <polyline points={RAIL} stroke="#636262" strokeWidth="26" />
      <polyline points={RAIL} stroke="#c9c7c7" strokeWidth="5" strokeDasharray="20 24" />
      <path d="M2985 790 L3165 965 M2962 835 L3050 930 L3130 1080 M2925 870 L3000 965 L3085 1110 M2500 220 L2478 300 M2552 235 L2525 320" stroke="#444" strokeWidth="5" />
      <path d="M2680 2150 L2745 2165 M2678 2160 L2660 2240 M2740 2175 L2715 2250" stroke="#444" strokeWidth="28" strokeDasharray="8 5" />
      <path d="M2680 2150 L2745 2165 M2678 2160 L2660 2240 M2740 2175 L2715 2250" stroke="#fff" strokeWidth="20" />
      <path d="M2680 2150 L2745 2165 M2678 2160 L2660 2240 M2740 2175 L2715 2250" stroke="#ee8f86" strokeWidth="7" strokeDasharray="14 12" />

      {tracks.map((p, i) => <polyline key={i} points={p} stroke="#b2904a" strokeWidth="10" strokeDasharray="36 17 12 17" />)}
      {longTracks.map((p, i) => <polyline key={i} points={p} stroke="#b2904a" strokeWidth="10" strokeDasharray="66 20" />)}
      {solidTracks.map((p, i) => <polyline key={i} points={p} stroke="#a98a45" strokeWidth="10" />)}
      {footways.map((p, i) => <polyline key={i} points={p} stroke="#f0938b" strokeWidth="6" strokeDasharray="13 13" />)}
      {cycleways.map((p, i) => <polyline key={i} points={p} stroke="#4c4ce0" strokeWidth="7" strokeDasharray="15 14" />)}
      <path d="M885 21 L1150 172" stroke="#e6c8c0" strokeWidth="5" />
      <path d="M4581 1300 L3558 2322 L3540 2421" stroke="#aca5aa" strokeWidth="5" />
      <rect x="3546" y="2311" width="24" height="24" fill="#e0dce0" stroke="#777" strokeWidth="4" />
      <circle cx="3746" cy="2302" r="11" fill="#cbe3a1" stroke="#999" strokeWidth="3" />
      <path d="M522 1402 V1468 M553 1404 V1470 M583 1406 V1471" stroke="#76bd9f" strokeWidth="3" />
    </g>
    <path d="M1228 550 V515 Q1239 490 1250 515 V550 Z M1215 540 H1250 V550 H1215 Z" fill="#8ba78e" />
    <path d="M4488 120 H4518 V152 H4526 V162 H4480 V152 H4488 Z" fill="#8db293" />
    <g fill="#8fbf86">
      {[[4470, 1905], [4518, 1890], [4520, 1980], [4422, 2080], [4470, 2130], [4518, 2130], [4518, 2225], [4470, 2270], [4565, 2030]].map(([x, y], i) => (
        <circle key={i} cx={x} cy={y} r="4" />
      ))}
    </g>
    <rect x="3302" y="165" width="56" height="55" fill="#7a7fb3" />
    <rect x="2763" y="1810" width="56" height="55" fill="#7a7fb3" />

    <g stroke="#fff" strokeOpacity="0.75" strokeWidth="9" strokeLinejoin="round" paintOrder="stroke">
      {labels.map((item, i) => <Label key={i} item={item} />)}
      <path id="corregudes" d="M812 1594 C960 1584 1040 1510 1140 1500 S1300 1502 1392 1526" fill="none" stroke="none" />
      <text fontSize="58" fill="#282828"><textPath href="#corregudes" textLength="588" lengthAdjust="spacingAndGlyphs">Camí de les Corregudes</textPath></text>
      <g fontWeight="700">
        <Label item={["Massanassa", 3130, 275, 3525, 275, 61, "#4a57a8"]} />
        <Label item={["Catarroja", 2635, 1938, 2940, 1938, 61, "#4a57a8"]} />
      </g>
      <Label item={["Catarroja", 2080, 1252, 2466, 1252, 82, "#404040"]} />
      <g fontStyle="italic">
        <Label item={["Barranc de Xiva", 3610, 1297, 4018, 1365, 54, "#5e93cf"]} />
      </g>
    </g>
    <g stroke="#f6dfe4" strokeWidth="9" paintOrder="stroke" fill="#b2304c" fontSize="60" textAnchor="middle">
      <text x="4523" y="1688">8</text>
      <text x="4402" y="1994">8</text>
    </g>
    <Label item={["ista de Silla", 4132, 2425, 4288, 2158, 54, "#4a2833"]} />

    <path d="M2248 1138 L2285 1030 Q2330 960 2380 990 Q2400 1030 2340 1080 Z" fill="url(#pinShadow)" />
    <path d="M2245 1138 L2184 1018 Q2170 996 2170 976 A75 75 0 0 1 2320 976 Q2320 996 2306 1018 Z" fill="url(#pin)" stroke="#2e6da4" strokeWidth="4" />
    <circle cx="2244" cy="974" r="24" fill="#fff" />
  </svg>
);

/* ---------- dashboard charts ---------- */

const BarChart = () => (
  <Chart $gap={14} width="708" height="430" viewBox="1361 870 708 430" fontSize="26" fill="#666" textAnchor="middle">
    <defs>
      <linearGradient id="barFill" x1="0" y1="0" x2="0" y2="1">
        <stop offset="0" stopColor="#0c1082" />
        <stop offset="1" stopColor="#5899d6" />
      </linearGradient>
    </defs>
    {[[1528, 976], [1791, 1145], [2054, 1140]].map(([x, y]) => (
      <path key={x} fill="url(#barFill)" d={`M${x} 1244 V${y + 30} A30 30 0 0 1 ${x + 30} ${y} H${x + 80} A30 30 0 0 1 ${x + 110} ${y + 30} V1244 Z`} />
    ))}
    <path d="M1361 1244 H2069 M1846.5 1244 V1256 M1583 1244 V1256" stroke="#666" strokeWidth="2" />
    <text x="1607" y="963">39</text>
    <text x="1846" y="1133">11</text>
    <text x="1583" y="1278">Sin categoría</text>
    <text x="1846.5" y="1278">Vacío</text>
    <text x="2109" y="1278">Promoción</text>
  </Chart>
);

const PieChart = () => (
  <Chart $gap={8} width="708" height="224" viewBox="1361 1520 708 224" fontSize="25" fill="#000">
    <defs>
      <linearGradient id="slice" x1="0" y1="0" x2="0" y2="1">
        <stop offset="0" stopColor="#222a80" />
        <stop offset="1" stopColor="#434fae" />
      </linearGradient>
    </defs>
    <path d="M1717.5 1576 L1717 1616" stroke="#4a52a8" strokeWidth="2" />
    <path d="M1835 1737 H1875" stroke="#6a4796" strokeWidth="2" />
    <g stroke="#fff" strokeWidth="2">
      <path d="M1716 1735.5 L1597 1732.5 A118 118 0 0 0 1600 1760 L1670 1760 Z" fill="#b23533" />
      <path d="M1712 1736 L1834 1737.5 L1832 1760 L1672 1760 Z" fill="#356a33" />
      <path d="M1716 1735.5 L1597 1732.5 A118.5 118.5 0 0 1 1834 1735.5 Z" fill="url(#slice)" />
    </g>
    <text x="1717.5" y="1575">Total: 5367</text>
    <text x="1885" y="1746">Total: 25</text>
  </Chart>
);

export default function App() {
  return (
    <Page>
      <GlobalStyle />
      <TopBar>
        <SearchField>
          <RoundButton $size={76} $top={-3} $color="#4d87e8">
            <svg width="32" height="32" viewBox="0 0 32 32" fill="none" stroke="#fff" strokeWidth="4" strokeLinecap="round">
              <circle cx="13.5" cy="13" r="10" />
              <path d="M21 21 L28 28" strokeWidth="5" />
            </svg>
          </RoundButton>
        </SearchField>
        <RoundButton $size={74} $top={1} $color="#e05852">
          <svg width="44" height="44" viewBox="0 0 44 44" fill="none" stroke="#fff" strokeWidth="4">
            <circle cx="22" cy="22" r="19" />
            <path d="M15.5 15.5 L28.5 28.5 M28.5 15.5 L15.5 28.5" strokeWidth="5" />
          </svg>
        </RoundButton>
      </TopBar>
      <Band />
      <Board>
        <Card $height={576} $pad={40}>
          <CardTitle $width={600}>Distribución de Categorías</CardTitle>
          <BarChart />
        </Card>
        <Card $height={400} $pad={32}>
          <CardTitle $width={440}>Inmuebles asignados a asesores</CardTitle>
          <PieChart />
        </Card>
      </Board>
      <Overlay />
      <Dialog role="dialog">
        <CloseButton>
          <svg width="20" height="20" viewBox="0 0 20 20" stroke="#777" strokeWidth="1.6">
            <path d="M1 1 L19 19 M19 1 L1 19" />
          </svg>
        </CloseButton>
        <Header>
          <Title>Añadir Inmueble</Title>
        </Header>
        <Form>
          <Row $height={78}>
            <Field $width={752} $pad="0 16px">
              <FieldText>Calle de Constitución 29, puerta 3</FieldText>
            </Field>
            <SelectField width={736}>Urbano</SelectField>
          </Row>
          <Row $height={76}>
            <SelectField width={745}>Residencial</SelectField>
            <SearchSelect width={743}>2003</SearchSelect>
          </Row>
          <Row $height={76}>
            <SearchSelect width={743}>170 m²</SearchSelect>
            <SelectField width={745}>Propietario</SelectField>
          </Row>
        </Form>
        <Accordion>
          <span>Más Opciones</span>
          <Chevron w={2.8} />
        </Accordion>
        <MapTitle>Selecciona su ubicación</MapTitle>
        <MapFrame>
          <CityMap />
          <ZoomControl>
            <ZoomButton $divided>
              <svg width="26" height="26" viewBox="0 0 26 26" stroke="#000" strokeWidth="4.5"><path d="M13 0.5 V25.5 M0.5 13 H25.5" /></svg>
            </ZoomButton>
            <ZoomButton>
              <svg width="26" height="26" viewBox="0 0 26 26" stroke="#000" strokeWidth="4.5"><path d="M0.5 17.5 H25.5" /></svg>
            </ZoomButton>
          </ZoomControl>
          <Attribution>
            <svg width="24" height="16" viewBox="0 0 12 8">
              <path fill="#4C7BE1" d="M0 0h12v4H0z" />
              <path fill="#FFD500" d="M0 4h12v3H0z" />
              <path fill="#E0BC00" d="M0 7h12v1H0z" />
            </svg>
            Leaflet
          </Attribution>
        </MapFrame>
        <Actions>
          <Button $primary>Añadir</Button>
          <Button>Cerrar</Button>
        </Actions>
      </Dialog>
    </Page>
  );
}
